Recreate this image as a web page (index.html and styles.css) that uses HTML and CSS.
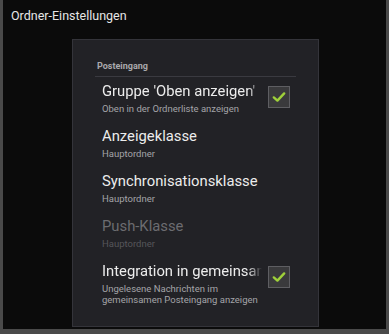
FILE: index.html
```html
<!DOCTYPE html>
<html lang="de">
<head>
    <meta charset="UTF-8">
    <meta name="viewport" content="width=device-width, initial-scale=1.0">
    <title>Ordner-Einstellungen</title>
    <link rel="stylesheet" href="styles.css">
</head>
<body>
    <div class="screen">
        <div class="app-title">Ordner-Einstellungen</div>

        <div class="panel">
            <div class="category">Posteingang</div>

            <div class="pref has-check">
                <div class="pref-text">
                    <div class="pref-title">Gruppe 'Oben anzeigen'</div>
                    <div class="pref-summary">Oben in der Ordnerliste anzeigen</div>
                </div>
                <div class="checkbox checked">
                    <svg viewBox="0 0 20 20" width="16" height="16"><polyline points="3.5,10.5 8,14.5 16.5,5.5" /></svg>
                </div>
            </div>

            <div class="pref">
                <div class="pref-text">
                    <div class="pref-title">Anzeigeklasse</div>
                    <div class="pref-summary">Hauptordner</div>
                </div>
            </div>

            <div class="pref">
                <div class="pref-text">
                    <div class="pref-title">Synchronisationsklasse</div>
                    <div class="pref-summary">Hauptordner</div>
                </div>
            </div>

            <div class="pref disabled">
                <div class="pref-text">
                    <div class="pref-title">Push-Klasse</div>
                    <div class="pref-summary">Hauptordner</div>
                </div>
            </div>

            <div class="pref has-check">
                <div class="pref-text">
                    <div class="pref-title">Integration in gemeinsamen Posteingang</div>
                    <div class="pref-summary">Ungelesene Nachrichten im gemeinsamen Posteingang anzeigen</div>
                </div>
                <div class="checkbox checked">
                    <svg viewBox="0 0 20 20" width="16" height="16"><polyline points="3.5,10.5 8,14.5 16.5,5.5" /></svg>
                </div>
            </div>
        </div>
    </div>
</body>
</html>
```

FILE: styles.css
```css
* {
    box-sizing: border-box;
    margin: 0;
    padding: 0;
}
body {
    font-family: Roboto, 'Noto Sans', sans-serif;
    background-color: #4a4a4a;
    width: 389px;
    height: 334px;
    overflow: hidden;
}
.screen {
    background-color: #0b0b0b;
    height: 329px;
    margin: 0 3px;
    display: flex;
    flex-direction: column;
    align-items: flex-start;
}
.app-title {
    color: #e6e6e6;
    font-size: 12.5px;
    line-height: 16px;
    padding: 8px 0 0 8px;
    height: 39px;
}
.panel {
    margin-left: 69px;
    width: 247px;
    height: 288px;
    background-color: #222226;
    border: 1px solid #34343a;
    padding-top: 20px;
}
.category {
    margin: 0 22px;
    padding: 0 2px 4px;
    border-bottom: 1px solid #3a3a40;
    color: #a9a9ad;
    font-size: 9px;
    font-weight: bold;
    line-height: 12px;
}
.pref {
    display: flex;
    align-items: flex-start;
    gap: 6px;
    height: 45px;
    padding: 5px 28px 0 29px;
}
.pref-text {
    flex: 1;
    min-width: 0;
}
.pref-title {
    color: #ececec;
    font-size: 14.8px;
    line-height: 18px;
    white-space: nowrap;
    overflow: hidden;
}
.pref-summary {
    color: #a4a4a8;
    font-size: 9.5px;
    line-height: 11px;
    margin-top: 3px;
}
.has-check .pref-title {
    -webkit-mask-image: linear-gradient(to right, #000 calc(100% - 14px), transparent);
    mask-image: linear-gradient(to right, #000 calc(100% - 14px), transparent);
}
.disabled .pref-title {
    color: #6c6c70;
}
.disabled .pref-summary {
    color: #56565a;
}
.checkbox {
    width: 22px;
    height: 22px;
    flex-shrink: 0;
    margin-top: 4px;
    background-color: #3a3a3c;
    border: 1px solid #5e5e62;
    display: flex;
    justify-content: center;
    align-items: center;
}
.checkbox polyline {
    fill: none;
    stroke: #9fd13a;
    stroke-width: 3;
    stroke-linecap: round;
    stroke-linejoin: round;
}
```
